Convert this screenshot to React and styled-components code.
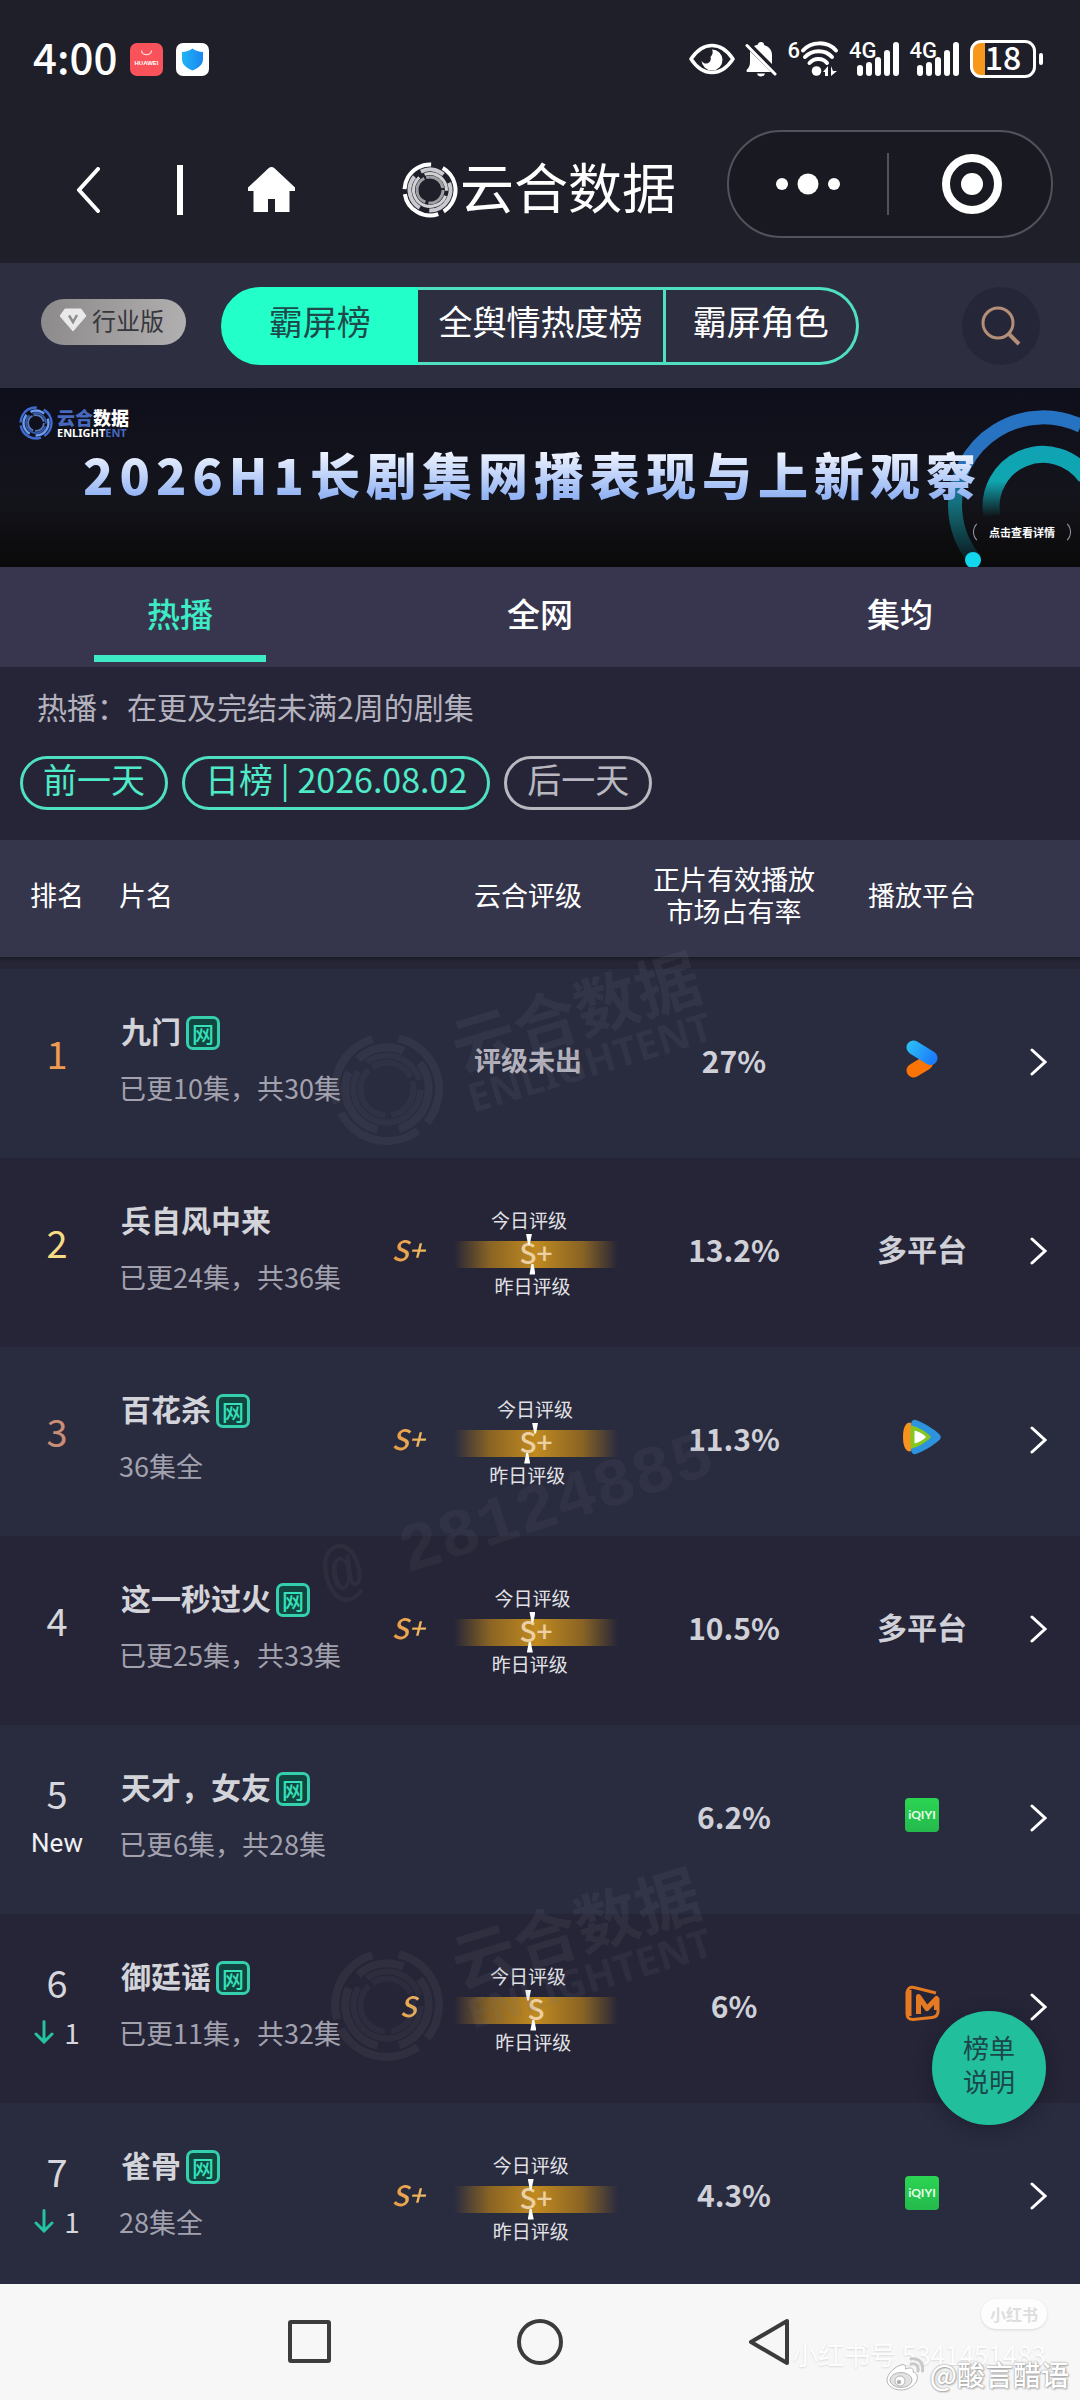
import React from 'react';
import styled, { createGlobalStyle, css } from 'styled-components';

const GlobalStyle = createGlobalStyle`
  *, *::before, *::after { box-sizing: border-box; }
  body {
    margin: 0;
    background: #252537;
    font-family: "Noto Sans CJK SC", "Noto Sans", sans-serif;
  }
  button {
    font: inherit;
    color: inherit;
    border: 0;
    padding: 0;
    background: none;
    cursor: pointer;
  }
  a { color: inherit; text-decoration: none; }
  svg { display: block; flex: none; }
`;

const Screen = styled.div`
  height: 100vh;
  display: flex;
  flex-direction: column;
  overflow: hidden;
  color: #fff;
`;

/* ---------- status bar ---------- */

const StatusBar = styled.div`
  display: flex;
  align-items: center;
  justify-content: space-between;
  height: 118px;
  padding: 0 37px 0 33px;
  background: #1f1f29;
`;

const StatusSide = styled.div`
  display: flex;
  align-items: center;
  gap: ${(p) => p.$gap}px;
`;

const Clock = styled.span`
  padding-bottom: 6px;
  font-size: 42px;
  line-height: 48px;
  font-weight: 500;
`;

const NetLabel = styled.span`
  font-family: "Roboto", sans-serif;
  font-size: 22px;
  line-height: 20px;
  font-weight: 500;
  align-self: flex-start;
`;

const Signal = styled.span`
  display: flex;
  align-items: center;
  height: 36px;
`;

const SignalBars = styled.svg`
  margin-left: -21px;
`;

const Battery = styled.span`
  display: flex;
  align-items: center;
  gap: 3px;
  &::after {
    content: '';
    width: 4px;
    height: 12px;
    border-radius: 2px;
    background: #fff;
  }
`;

const BatteryBody = styled.span`
  width: 66px;
  height: 38px;
  border: 3px solid #fff;
  border-radius: 11px;
  text-align: center;
  font-size: 32px;
  line-height: 26px;
  font-weight: 500;
  background: linear-gradient(90deg, #f7981d 20%, transparent 20%);
`;

/* ---------- title bar ---------- */

const NavBar = styled.header`
  display: flex;
  align-items: center;
  height: 145px;
  padding: 0 27px 2px 77px;
  background: #1f1f29;
`;

const NavDivider = styled.span`
  width: 6px;
  height: 50px;
  margin: 0 65px 0 77px;
  background: #fff;
`;

const Brand = styled.h1`
  display: flex;
  align-items: center;
  gap: 2px;
  margin: 0 auto 0 107px;
  font-size: 54px;
  line-height: 64px;
  font-weight: 400;
`;

const BrandName = styled.span`
  padding-bottom: 8px;
`;

const Capsule = styled.div`
  display: flex;
  align-items: center;
  width: 326px;
  height: 108px;
  margin-bottom: 11px;
  border: 2px solid #52525c;
  border-radius: 54px;
  background: #191921;
  button {
    flex: 1;
    display: flex;
    justify-content: center;
  }
  button + button {
    padding-left: 4px;
    border-left: 2px solid #52525c;
  }
`;

/* ---------- chart switcher ---------- */

const Toolbar = styled.div`
  display: flex;
  align-items: center;
  height: 125px;
  padding: 0 40px 0 41px;
  background: #2d2f41;
`;

const Edition = styled.button`
  display: flex;
  align-items: center;
  justify-content: center;
  gap: 6px;
  width: 145px;
  height: 46px;
  && { padding: 0 3px 3px 0; }
  margin-bottom: 8px;
  border-radius: 23px;
  background: linear-gradient(100deg, #8b8989, #b2b0b1);
  color: #37373c;
  font-size: 24px;
  line-height: 36px;
`;

const Segments = styled.div`
  display: flex;
  width: 638px;
  height: 78px;
  margin: 0 auto 0 35px;
`;

const Segment = styled.button`
  flex: ${(p) => p.$grow} 1 0;
  padding-bottom: 10px;
  border: 3px solid #4fe0c0;
  font-size: 34px;
  line-height: 48px;
  color: #fff;
  & + & { border-left-width: 0; }
  &:first-child { border-radius: 39px 0 0 39px; }
  &:last-child { border-radius: 0 39px 39px 0; }
  ${(p) => p.$active && css`
    border-color: #23ffc8;
    background: #23ffc8;
    color: #1d4a4b;
  `}
`;

const SearchButton = styled.button`
  display: flex;
  align-items: center;
  justify-content: center;
  width: 78px;
  height: 78px;
  border-radius: 50%;
  background: #262639;
`;

/* ---------- banner ---------- */

const Banner = styled.a`
  display: block;
  position: relative;
  height: 179px;
  padding: 18px 8px 0 19px;
  overflow: hidden;
  background: linear-gradient(180deg, #0e0f1b, #14141c 60%, #0a0a0a);
`;

const BannerArt = styled.svg`
  position: absolute;
  right: 0;
  top: 0;
`;

const BannerBrand = styled.div`
  display: flex;
  align-items: center;
  gap: 4px;
`;

const BannerName = styled.div`
  display: flex;
  flex-direction: column;
  color: #fff;
  em { font-style: normal; color: #4668bd; }
`;

const BannerNameCn = styled.span`
  display: flex;
  font-size: 18px;
  line-height: 20px;
  font-weight: 900;
`;

const BannerNameEn = styled.span`
  display: flex;
  font-family: "Noto Sans", sans-serif;
  font-size: 11px;
  line-height: 12px;
  font-weight: 700;
`;

const BannerTitle = styled.h2`
  position: relative;
  margin: 0 0 0 64px;
  font-size: 50px;
  line-height: 66px;
  font-weight: 900;
  letter-spacing: 6px;
  white-space: nowrap;
  background: linear-gradient(180deg, #eef3ff 20%, #93b4f4 85%);
  background-clip: text;
  -webkit-background-clip: text;
  color: transparent;
`;

const BannerMore = styled.span`
  position: absolute;
  right: 9px;
  bottom: 23px;
  width: 98px;
  border: 1px solid #99a;
  border-top-color: transparent;
  border-bottom-color: transparent;
  border-radius: 12px;
  text-align: center;
  font-size: 11px;
  line-height: 22px;
  font-weight: 700;
`;

/* ---------- tabs and day filter ---------- */

const Tabs = styled.nav`
  display: flex;
  height: 100px;
  background: #38364f;
`;

const Tab = styled.button`
  flex: 1;
  display: flex;
  flex-direction: column;
  align-items: center;
  padding-top: 22px;
  font-size: 33px;
  line-height: 48px;
  font-weight: 500;
  color: ${(p) => (p.$active ? '#3decc4' : '#fff')};
  &::after {
    content: '';
    width: 172px;
    height: 7px;
    margin-top: 18px;
    background: ${(p) => (p.$active ? '#3decc4' : 'transparent')};
  }
`;

const Filter = styled.section`
  height: 173px;
  padding: 17px 20px 0;
  background: #252537;
`;

const Note = styled.p`
  margin: 0 0 28px 17px;
  font-size: 30px;
  line-height: 44px;
  color: #b4b2be;
`;

const Days = styled.div`
  display: flex;
  gap: 14px;
`;

const DayButton = styled.button`
  height: 54px;
  padding: 0 20px 8px;
  border: 3px solid ${(p) => (p.$muted ? '#b9b8c0' : '#4fe0c0')};
  border-radius: 27px;
  font-size: 34px;
  line-height: 40px;
  color: ${(p) => (p.$muted ? '#b9b8c0' : '#4feac8')};
`;

/* ---------- ranking table ---------- */

const Board = styled.main`
  position: relative;
  flex: 1;
  min-height: 0;
  overflow: hidden;
  background: #252537;
`;

const Table = styled.table`
  width: 100%;
  border-collapse: collapse;
  table-layout: fixed;
  th, td { padding: 0; text-align: center; }
`;

const HeadCell = styled.th`
  width: ${(p) => (p.$w ? `${p.$w}px` : 'auto')};
  height: 117px;
  background: #35364c;
  font-size: 27px;
  line-height: 32px;
  font-weight: 400;
  && {
    padding: 0 0 7px ${(p) => p.$left || 0}px;
    text-align: ${(p) => (p.$left ? 'left' : 'center')};
  }
`;

const HeadShadow = styled.tr`
  height: 12px;
  background: linear-gradient(180deg, #1b1b27, #252536 40%);
`;

const Row = styled.tr`
  height: 189px;
  background: #252537;
  &:nth-child(odd) { background: #292b3f; }
`;

const Rank = styled.div`
  display: flex;
  flex-direction: column;
  align-items: center;
  gap: 12px;
  padding-bottom: ${(p) => (p.$single ? 22 : 14)}px;
  font-size: 38px;
  line-height: 48px;
  color: ${(p) => p.$color || '#d6d6dc'};
`;

const Trend = styled.span`
  display: flex;
  align-items: center;
  gap: 10px;
  height: 28px;
  font-size: 28px;
  line-height: 28px;
`;

const NewMark = styled.span`
  height: 28px;
  font-family: "Roboto", sans-serif;
  font-size: 26px;
  line-height: 28px;
  font-weight: 400;
  color: #f0f0f4;
`;

const Show = styled.div`
  display: flex;
  flex-direction: column;
  gap: 22px;
  padding: 0 0 10px 5px;
  text-align: left;
`;

const ShowTitle = styled.a`
  display: flex;
  gap: 5px;
  height: 36px;
  padding-left: 2px;
  font-size: 30px;
  line-height: 36px;
  font-weight: 700;
  color: #d3d3da;
`;

const WebTag = styled.span`
  width: 34px;
  height: 34px;
  margin-top: 4px;
  border: 3px solid #35cfae;
  border-radius: 7px;
  background: #12453f;
  text-align: center;
  font-size: 22px;
  line-height: 26px;
  font-weight: 500;
  color: #35e0ba;
`;

const Episodes = styled.span`
  font-size: 27px;
  line-height: 36px;
  color: #a2a1ae;
`;

const Grade = styled.span`
  display: block;
  padding: 0 4px 7px 0;
  font-size: 28px;
  line-height: 40px;
  font-style: italic;
  font-weight: 500;
  background: linear-gradient(90deg, #e58e3c, #f2c96f);
  background-clip: text;
  -webkit-background-clip: text;
  color: transparent;
`;

const Pending = styled.span`
  display: block;
  padding-bottom: 7px;
  font-size: 27px;
  line-height: 40px;
  font-weight: 700;
  color: #b4b3bd;
`;

const Scale = styled.div`
  width: 164px;
  margin-left: 18px;
`;

const ScaleBar = styled.div`
  height: 27px;
  background: linear-gradient(90deg, transparent, #8a6424 22%, #c08a20 50%, #8a6424 78%, transparent);
  font-size: 28px;
  line-height: 22px;
  font-weight: 500;
  color: #ecd0a4;
`;

const Marker = styled.div`
  display: grid;
  font-size: 19px;
  line-height: 28px;
  color: #e2e2e6;
  white-space: nowrap;
`;

// pointers reach over the edge of the bar
const MarkerLabel = styled.span`
  position: relative;
  grid-column: 2;
  padding: ${(p) => (p.$below ? '4px 0 0' : '0 0 7px')};
  &::after {
    content: '';
    position: absolute;
    left: calc(50% - 3px);
    ${(p) => (p.$below ? 'top: -4px;' : 'bottom: -4px;')}
    width: 6px;
    height: 11px;
    background: #fff;
    clip-path: ${(p) => (p.$below
      ? 'polygon(35% 0, 65% 0, 100% 100%, 0 100%)'
      : 'polygon(0 0, 100% 0, 65% 100%, 35% 100%)')};
  }
`;

const Share = styled.span`
  display: block;
  padding-bottom: 8px;
  font-size: 30px;
  line-height: 40px;
  font-weight: 700;
  color: #d0d0d8;
`;

const Platform = styled.span`
  display: flex;
  justify-content: center;
  padding-bottom: 10px;
  font-size: 30px;
  line-height: 36px;
  font-weight: 700;
  color: #d0d0d8;
`;

const DetailButton = styled.button`
  && { padding-top: 2px; }
`;

const Watermark = styled.div`
  position: absolute;
  left: 324px;
  top: ${(p) => p.$top}px;
  display: flex;
  align-items: center;
  gap: 18px;
  transform: rotate(-17deg);
  pointer-events: none;
  color: rgba(116, 116, 128, 0.13);
  font-size: 64px;
  line-height: 66px;
  font-weight: 700;
  white-space: nowrap;
  small {
    display: block;
    font-family: "Noto Sans", sans-serif;
    font-size: 40px;
    line-height: 44px;
  }
`;

const UserMark = styled.div`
  position: absolute;
  left: 314px;
  top: 640px;
  transform: rotate(-18deg);
  pointer-events: none;
  color: rgba(110, 110, 116, 0.12);
  font: 700 68px/76px "Liberation Mono", monospace;
  white-space: pre;
`;

const HelpButton = styled.button`
  position: absolute;
  right: 34px;
  bottom: 159px;
  width: 114px;
  height: 114px;
  && { padding: 0 31px 8px; }
  border-radius: 50%;
  background: #21bf9c;
  box-shadow: 0 4px 18px rgba(20, 20, 34, 0.45);
  font-size: 26px;
  line-height: 34px;
  color: #1b474b;
`;

/* ---------- system navigation ---------- */

const SystemNav = styled.footer`
  position: relative;
  display: flex;
  justify-content: center;
  align-items: center;
  gap: 184px;
  height: 116px;
  background: #f7f7f7;
`;

const NoteBadge = styled.span`
  position: absolute;
  right: 33px;
  top: 15px;
  padding: 0 9px;
  border-radius: 15px;
  background: #fdfdfd;
  box-shadow: 0 1px 3px rgba(0, 0, 0, 0.12);
  font-size: 16px;
  line-height: 30px;
  font-weight: 700;
  color: #dedede;
`;

const NoteId = styled.span`
  position: absolute;
  right: 34px;
  top: 54px;
  font-size: 26px;
  line-height: 32px;
  color: #fdfdfd;
  text-shadow: 0 1px 2px rgba(0, 0, 0, 0.12);
  white-space: nowrap;
`;

const PostMark = styled.span`
  position: absolute;
  right: 11px;
  bottom: 7px;
  display: flex;
  align-items: center;
  gap: 6px;
  font-size: 28px;
  line-height: 38px;
  font-weight: 500;
  color: #fff;
  text-shadow: 0 0 2px #888, 1px 1px 2px #aaa;
`;

/* ---------- drawings ---------- */

const Rings = ({ size, color, accent = color }) => (
  <svg width={size} height={size} viewBox="0 0 56 56" fill="none" aria-hidden="true">
    <circle cx="28" cy="28" r="25.5" stroke={color} strokeWidth="4" strokeDasharray="52 6 44 5 40 13" transform="rotate(-60 28 28)" />
    <circle cx="28" cy="28" r="20.5" stroke={accent} strokeWidth="4" strokeDasharray="36 8 24 10 40 11" transform="rotate(120 28 28)" />
    <circle cx="28" cy="28" r="16.5" stroke={color} strokeWidth="3" strokeDasharray="60 6 32 5" transform="rotate(20 28 28)" opacity=".8" />
    <circle cx="28" cy="28" r="13" stroke={accent} strokeWidth="3" strokeDasharray="22 3 30 2" opacity=".75" />
  </svg>
);

const StoreIcon = () => (
  <svg width="33" height="33" viewBox="0 0 33 33" aria-hidden="true">
    <rect width="33" height="33" rx="7" fill="#f9525a" />
    <path d="M11.5 7.5a5 4.2 0 0 0 10 0" stroke="#ffd9d9" strokeWidth="1.3" fill="none" />
    <text x="16.5" y="21.5" textAnchor="middle" fontFamily="Liberation Sans" fontWeight="700" fontSize="6" fill="#fff">HUAWEI</text>
  </svg>
);

const ShieldIcon = () => (
  <svg width="33" height="33" viewBox="0 0 33 33" aria-hidden="true">
    <defs>
      <linearGradient id="shield" x1="0" y1="0" x2="1" y2="0">
        <stop offset="0" stopColor="#1fb4f5" />
        <stop offset="1" stopColor="#1a86f0" />
      </linearGradient>
    </defs>
    <rect width="33" height="33" rx="7" fill="#fff" />
    <path d="M16.5 5.5c3 2.2 6.600 3.300 10.500 3.500v7c0 6-4.500 9-10.500 11.500C10.500 25 6 22 6 16V9c3.900-.2 7.500-1.300 10.500-3.500z" fill="url(#shield)" />
  </svg>
);

const EyeIcon = () => (
  <svg width="46" height="32" viewBox="0 0 46 32" aria-hidden="true">
    <path d="M2 16C8 7 15 2.500 23 2.500S38 7 44 16c-6 9-13 13.500-21 13.500S8 25 2 16z" fill="none" stroke="#fff" strokeWidth="3.500" strokeLinejoin="round" />
    <path d="M23 6.500a10.500 10.500 0 1 1-10.500 11 4.800 4.800 0 1 0 9-3.500c2-2 3-5 1.500-7.500z" fill="#fff" />
  </svg>
);

const MuteIcon = () => (
  <svg width="32" height="36" viewBox="0 0 32 36" aria-hidden="true">
    <path d="M5 10l21 21H3c-1.500 0-2-1-1-2.500 2-2 3-4 3-8zM16 1c2 0 3 1 3 3 5 1.500 8 5 8 10v9L9 5c1.300-.7 2.600-1 4-1.500C13 2 14 1 16 1zM12 32.500h8c-.5 2-2 3-4 3s-3.500-1-4-3z" fill="#fff" />
    <path d="M2 4.500L30 33" stroke="#fff" strokeWidth="3" strokeLinecap="round" />
  </svg>
);

const WifiIcon = () => (
  <svg width="39" height="36" viewBox="0 0 39 36" aria-hidden="true">
    <g fill="none" stroke="#fff" strokeWidth="4" strokeLinecap="round">
      <path d="M3 9.500c8-9 24-10 33 0" />
      <path d="M5 16c7-7.500 20-8 27 0" />
      <path d="M9.500 22c4.500-5 13-5.500 17.500 0" />
    </g>
    <circle cx="16.500" cy="30" r="4.800" fill="#fff" />
    <path d="M28 25v10h-3v-4h-2zM31 35V25l2 5h4z" fill="#fff" />
  </svg>
);

const Bars = () => (
  <SignalBars width="44" height="36" viewBox="0 0 44 36" aria-hidden="true">
    <g stroke="#fff" strokeWidth="6" strokeLinecap="round">
      <path d="M4 27v5M13 24v8M22 19v13M31 12v20M40 4v28" />
    </g>
  </SignalBars>
);

const PhoneSignal = () => (
  <Signal>
    <NetLabel>4G</NetLabel>
    <Bars />
  </Signal>
);

const Chevron = ({ left, w, h, stroke }) => (
  <svg width={w} height={h} viewBox={`0 0 ${w} ${h}`} aria-hidden="true">
    <polyline
      points={left
        ? `${w - 2},2 2,${h / 2} ${w - 2},${h - 2}`
        : `2,2 ${w - 2},${h / 2} 2,${h - 2}`}
      fill="none" stroke="#fff" strokeWidth={stroke} strokeLinecap="round" strokeLinejoin="miter"
    />
  </svg>
);

const HomeIcon = () => (
  <svg width="47" height="45" viewBox="0 0 47 45" aria-hidden="true">
    <path d="M23.500 0c1 0 2 .5 3 1.300L47 20.500V24h-5.500v21H27V32h-7v13H5.500V24H0v-3.500L20.500 1.300c1-.8 2-1.300 3-1.300z" fill="#fff" />
  </svg>
);

const DiamondIcon = () => (
  <svg width="26" height="24" viewBox="0 0 26 24" aria-hidden="true">
    <path d="M5 1h16l5 7-13 15L0 8z" fill="#e9e9e9" stroke="#e9e9e9" strokeLinejoin="round" />
    <path d="M9 7.500l4 6.500 4-7" fill="none" stroke="#8d8d8d" strokeWidth="2.500" />
  </svg>
);

const SearchIcon = () => (
  <svg width="40" height="40" viewBox="0 0 40 40" fill="none" stroke="#b48f78" strokeWidth="3" aria-hidden="true">
    <circle cx="17" cy="17" r="15" />
    <path d="M28 28l10 10" strokeWidth="4" />
  </svg>
);

const Arcs = () => (
  <BannerArt width="140" height="179" viewBox="0 0 140 179" fill="none" aria-hidden="true">
    <defs>
      <linearGradient id="arcOuter" x1="0" y1="20" x2="0" y2="172" gradientUnits="userSpaceOnUse">
        <stop offset="0" stopColor="#2573c4" />
        <stop offset=".35" stopColor="#2a72be" />
        <stop offset=".62" stopColor="#14727f" />
        <stop offset="1" stopColor="#0b1a1e" />
      </linearGradient>
      <linearGradient id="arcInner" x1="0" y1="58" x2="0" y2="128" gradientUnits="userSpaceOnUse">
        <stop offset="0" stopColor="#0fa3b4" />
        <stop offset=".5" stopColor="#10a6b0" />
        <stop offset="1" stopColor="#10171c" />
      </linearGradient>
    </defs>
    <path d="M34 171A88 88 0 0 1 15 117A88 88 0 0 1 141 38" stroke="url(#arcOuter)" strokeWidth="14" />
    <path d="M52 128A52 52 0 0 1 146 89" stroke="url(#arcInner)" strokeWidth="17" />
    <circle cx="33" cy="172" r="8" fill="#12d6ec" />
  </BannerArt>
);

const DownArrow = () => (
  <svg width="20" height="24" viewBox="0 0 20 24" fill="none" stroke="#25c4a0" strokeWidth="3" strokeLinecap="round" aria-hidden="true">
    <path d="M10 1.500V22M2 14l8 8 8-8" />
  </svg>
);

const YoukuIcon = () => (
  <svg width="32" height="38" viewBox="0 0 32 38" fill="none" strokeLinecap="round" role="img" aria-label="优酷">
    <defs>
      <linearGradient id="youku" x1="0" y1="6" x2="26" y2="22" gradientUnits="userSpaceOnUse">
        <stop offset="0" stopColor="#2cc0f5" />
        <stop offset="1" stopColor="#1b7dfb" />
      </linearGradient>
    </defs>
    <path d="M7.500 30.500L20 23" stroke="#fb7406" strokeWidth="14" />
    <path d="M7.500 7.500L24.500 18" stroke="url(#youku)" strokeWidth="14" />
  </svg>
);

const TencentIcon = () => (
  <svg width="38" height="36" viewBox="0 0 38 36" role="img" aria-label="腾讯视频">
    <path d="M7 3.500C3 3.500 0 8 0 18s3 14.500 7 14.500l6-6V9z" fill="#f7931e" />
    <path d="M12 .8c-3 0-4 2.500-4 5v24c0 3 1 5.500 4 5.500 5-.8 20-9.500 25-15 1-1.400 1-3 0-4.300C32 10.500 17 1.600 12 .8z" fill="#2d93dc" />
    <path d="M8 6.500C13 7 24 13 28 18c-4 5-15 11-20 11.500-1-6-1-17 0-23z" fill="#86c61f" />
    <path d="M11.500 11.500c4 1 9 3.500 11.500 6.500-2.500 3-7.500 5.500-11.500 6.500z" fill="#fff" />
  </svg>
);

const IqiyiIcon = () => (
  <svg width="34" height="34" viewBox="0 0 34 34" role="img" aria-label="爱奇艺">
    <defs>
      <linearGradient id="iqiyi" x1="0" y1="0" x2="0" y2="1">
        <stop offset="0" stopColor="#2bd553" />
        <stop offset="1" stopColor="#24b94c" />
      </linearGradient>
    </defs>
    <rect width="34" height="34" rx="4" fill="url(#iqiyi)" />
    <text x="17" y="21" textAnchor="middle" fontFamily="Lato" fontWeight="700" fontSize="12" fill="#e6ffe9">iQIYI</text>
  </svg>
);

const MangoIcon = () => (
  <svg width="35" height="37" viewBox="0 0 35 37" fill="none" stroke="#e57a22" role="img" aria-label="芒果TV">
    <path d="M31 8L9 2.500C5 1.500 2.500 3.500 2 7.500v21c0 4 2 6 6 6l19-2c4-.5 6-2.500 6-6V13" strokeWidth="3" />
    <path d="M4 5v26" strokeWidth="5" />
    <path d="M13.500 29V11.500l8.500 12 9.500-10V25" strokeWidth="5" strokeLinejoin="round" />
  </svg>
);

const WeiboIcon = () => (
  <svg width="38" height="34" viewBox="0 0 38 34" fill="#fff" stroke="#b5b5b5" strokeWidth="1" aria-hidden="true">
    <path d="M15 8c3-1 5 0 4.500 4 5-2 9-1 7.500 3 4 1 5 4 4 8-2 6-9 10-16 10S1 29 1 23 9 9.500 15 8z" />
    <ellipse cx="15" cy="23" rx="11" ry="7.500" fill="#e2e2e2" />
    <circle cx="14" cy="24" r="5" />
    <circle cx="13" cy="25" r="1.800" fill="#aaa" />
    <path d="M25 7c5-1 8 2 7 7M25 2c8-1 13 4 11.500 12" fill="none" stroke="#c9c9c9" strokeWidth="3" strokeLinecap="round" />
  </svg>
);

/* ---------- data ---------- */

const platformIcons = {
  youku: <YoukuIcon />,
  tencent: <TencentIcon />,
  iqiyi: <IqiyiIcon />,
  mango: <MangoIcon />,
};

// today / yesterday: position on the rating scale, 0 - 100
const shows = [
  { rank: 1, color: '#ef9b52', title: '九门', web: true, episodes: '已更10集，共30集', share: '27%', platform: 'youku', pending: true },
  { rank: 2, color: '#f7dc85', title: '兵自风中来', episodes: '已更24集，共36集', grade: 'S+', today: 42, yesterday: 46, share: '13.2%' },
  { rank: 3, color: '#c98e76', title: '百花杀', web: true, episodes: '36集全', grade: 'S+', today: 49, yesterday: 40, share: '11.3%', platform: 'tencent' },
  { rank: 4, title: '这一秒过火', web: true, episodes: '已更25集，共33集', grade: 'S+', today: 46, yesterday: 43, share: '10.5%' },
  { rank: 5, isNew: true, title: '天才，女友', web: true, episodes: '已更6集，共28集', share: '6.2%', platform: 'iqiyi' },
  { rank: 6, down: 1, title: '御廷谣', web: true, episodes: '已更11集，共32集', grade: 'S', today: 41, yesterday: 47, share: '6%', platform: 'mango' },
  { rank: 7, down: 1, title: '雀骨', web: true, episodes: '28集全', grade: 'S+', today: 44, yesterday: 44, share: '4.3%', platform: 'iqiyi' },
];

const scaleColumns = (pos) => ({ gridTemplateColumns: `${pos}fr auto ${100 - pos}fr` });

const RatingScale = ({ show }) => (
  <Scale>
    <Marker style={scaleColumns(show.today)}>
      <MarkerLabel>今日评级</MarkerLabel>
    </Marker>
    <ScaleBar>{show.grade}</ScaleBar>
    <Marker style={scaleColumns(show.yesterday)}>
      <MarkerLabel $below>昨日评级</MarkerLabel>
    </Marker>
  </Scale>
);

const ShowRow = ({ show }) => (
  <Row>
    <td>
      <Rank $color={show.color} $single={!show.isNew && !show.down}>
        {show.rank}
        {show.isNew && <NewMark>New</NewMark>}
        {show.down && <Trend><DownArrow />{show.down}</Trend>}
      </Rank>
    </td>
    <td>
      <Show>
        <ShowTitle href="#">
          {show.title}
          {show.web && <WebTag>网</WebTag>}
        </ShowTitle>
        <Episodes>{show.episodes}</Episodes>
      </Show>
    </td>
    <td>{show.grade && <Grade>{show.grade}</Grade>}</td>
    <td>
      {show.pending && <Pending>评级未出</Pending>}
      {show.grade && <RatingScale show={show} />}
    </td>
    <td><Share>{show.share}</Share></td>
    <td><Platform>{show.platform ? platformIcons[show.platform] : '多平台'}</Platform></td>
    <td>
      <DetailButton aria-label={`查看${show.title}`}><Chevron w={17} h={28} stroke={3} /></DetailButton>
    </td>
  </Row>
);

const BrandWatermark = ({ top }) => (
  <Watermark $top={top} aria-hidden="true">
    <Rings size={114} color="currentColor" />
    <div>云合数据<small>ENLIGHTENT</small></div>
  </Watermark>
);

const App = () => (
  <>
    <GlobalStyle />
    <Screen>
      <StatusBar>
        <StatusSide $gap={13}>
          <Clock>4:00</Clock>
          <StoreIcon />
          <ShieldIcon />
        </StatusSide>
        <StatusSide $gap={10}>
          <EyeIcon />
          <MuteIcon />
          <Signal>
            <NetLabel>6</NetLabel>
            <WifiIcon />
          </Signal>
          <PhoneSignal />
          <PhoneSignal />
          <Battery><BatteryBody>18</BatteryBody></Battery>
        </StatusSide>
      </StatusBar>

      <NavBar>
        <button aria-label="返回"><Chevron left w={23} h={46} stroke={4} /></button>
        <NavDivider />
        <button aria-label="首页"><HomeIcon /></button>
        <Brand><Rings size={56} color="#fff" accent="#c9c9cf" /><BrandName>云合数据</BrandName></Brand>
        <Capsule>
          <button aria-label="更多">
            <svg width="66" height="62" viewBox="0 0 66 62" fill="#fff">
              <circle cx="7" cy="31" r="6" />
              <circle cx="33" cy="31" r="10.500" />
              <circle cx="59" cy="31" r="6" />
            </svg>
          </button>
          <button aria-label="关闭">
            <svg width="62" height="62" viewBox="0 0 62 62">
              <circle cx="31" cy="31" r="26" fill="none" stroke="#fff" strokeWidth="8" />
              <circle cx="31" cy="31" r="11" fill="#fff" />
            </svg>
          </button>
        </Capsule>
      </NavBar>

      <Toolbar>
        <Edition><DiamondIcon />行业版</Edition>
        <Segments>
          <Segment $grow={195} $active>霸屏榜</Segment>
          <Segment $grow={249}>全舆情热度榜</Segment>
          <Segment $grow={194}>霸屏角色</Segment>
        </Segments>
        <SearchButton aria-label="搜索"><SearchIcon /></SearchButton>
      </Toolbar>

      <Banner href="#">
        <Arcs />
        <BannerBrand>
          <Rings size={34} color="#3f6bd0" accent="#6f9cf0" />
          <BannerName>
            <BannerNameCn><em>云合</em>数据</BannerNameCn>
            <BannerNameEn>ENLIGHT<em>ENT</em></BannerNameEn>
          </BannerName>
        </BannerBrand>
        <BannerTitle>2026H1长剧集网播表现与上新观察</BannerTitle>
        <BannerMore>点击查看详情</BannerMore>
      </Banner>

      <Tabs>
        <Tab $active>热播</Tab>
        <Tab>全网</Tab>
        <Tab>集均</Tab>
      </Tabs>

      <Filter>
        <Note>热播：在更及完结未满2周的剧集</Note>
        <Days>
          <DayButton>前一天</DayButton>
          <DayButton>日榜 | 2026.08.02</DayButton>
          <DayButton $muted>后一天</DayButton>
        </Days>
      </Filter>

      <Board>
        <Table>
          <thead>
            <tr>
              <HeadCell $w={114}>排名</HeadCell>
              <HeadCell $left={5}>片名</HeadCell>
              <HeadCell $w={52} aria-label="等级" />
              <HeadCell $w={184}>云合评级</HeadCell>
              <HeadCell $w={228}>正片有效播放<br />市场占有率</HeadCell>
              <HeadCell $w={148}>播放平台</HeadCell>
              <HeadCell $w={84} aria-label="详情" />
            </tr>
            <HeadShadow><td colSpan={7} /></HeadShadow>
          </thead>
          <tbody>
            {shows.map((s) => <ShowRow key={s.rank} show={s} />)}
          </tbody>
        </Table>
        <BrandWatermark top={152} />
        <UserMark aria-hidden="true">@ 28124885</UserMark>
        <BrandWatermark top={1068} />
        <HelpButton>榜单说明</HelpButton>
      </Board>

      <SystemNav>
        <svg width="46" height="46" viewBox="0 0 46 46" fill="none" stroke="#3c3c3c" strokeWidth="4">
          <rect x="3" y="3" width="39" height="39" rx="1" />
        </svg>
        <svg width="46" height="46" viewBox="0 0 46 46" fill="none" stroke="#3c3c3c" strokeWidth="4">
          <circle cx="23" cy="23" r="21" />
        </svg>
        <svg width="46" height="50" viewBox="0 0 46 50" fill="none" stroke="#3c3c3c" strokeWidth="4" strokeLinejoin="round">
          <path d="M40 4v42L4 25z" />
        </svg>
        <NoteBadge>小红书</NoteBadge>
        <NoteId>小红书号 5341451483</NoteId>
        <PostMark><WeiboIcon />@酸言醋语</PostMark>
      </SystemNav>
    </Screen>
  </>
);

export default App;
